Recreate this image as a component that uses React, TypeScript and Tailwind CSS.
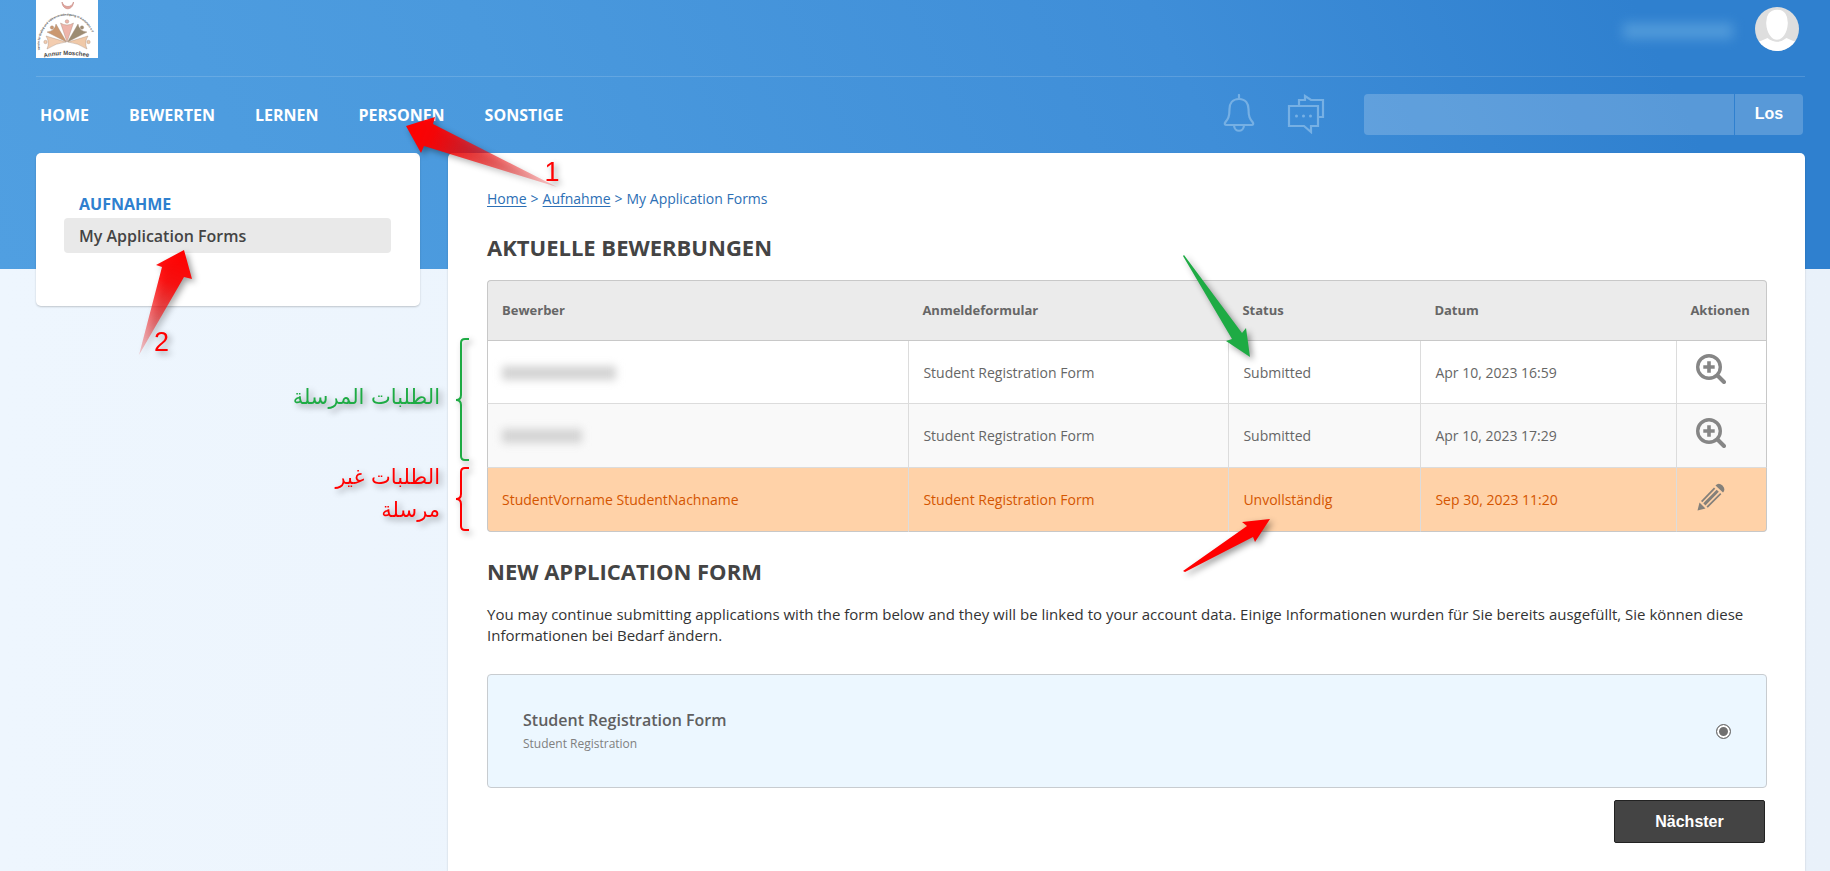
import React from "react";

const shadow = "drop-shadow-[3px_3px_3px_rgba(0,0,0,0.4)]";

function Logo() {
  return (
    <svg viewBox="0 0 62 58" className="h-[58px] w-[62px] bg-white" role="img" aria-label="Annur Moschee">
      <defs>
        <path id="logo-arc" d="M4 50C1 34 12 15.500 31 15.500S61 34 58 50" />
        <path id="logo-base" d="M8 57.500Q31 52.500 55 57.500" />
      </defs>
      <path d="M26 2C26.500 11 37 11 37.500 2C36 8 28 8 26 2Z" fill="#e3a39b" stroke="#c98f88" strokeWidth=".7" />
      <text fontFamily="Liberation Sans, sans-serif" fontSize="2.900" fontWeight="700" fill="#444">
        <textPath href="#logo-arc">Verein für Dialog und Völkerverständigung in Karlsruhe e.V</textPath>
      </text>
      <g stroke="#a58a78" strokeWidth=".4">
        <path d="M31 42L24.500 23Q31 27 37.500 23Z" fill="#eeb4aa" />
        <path d="M30.500 42L11 32Q19 31 20 24Z" fill="#cb9870" />
        <path d="M31.500 42L51 32Q43 31 42 24Z" fill="#9c8c72" />
        <path d="M30 42L10 36Q14 42 11 49Q20 43 30 42Z" fill="#f3cdb0" />
        <path d="M32 42L52 36Q48 42 51 49Q42 43 32 42Z" fill="#f0c9a8" />
        <circle cx="31" cy="21.500" r="1.800" fill="#eeb4aa" />
        <circle cx="16" cy="27.500" r="1.700" fill="#cb9870" />
        <circle cx="46" cy="27.500" r="1.700" fill="#9c8c72" />
        <circle cx="9.500" cy="42" r="1.700" fill="#f3cdb0" />
        <circle cx="52.500" cy="42" r="1.700" fill="#f0c9a8" />
      </g>
      <text fontFamily="Liberation Sans, sans-serif" fontSize="6" fontWeight="700" fill="#4a4a4a">
        <textPath href="#logo-base">Annur Moschee</textPath>
      </text>
    </svg>
  );
}

function Avatar() {
  return (
    <svg viewBox="0 0 44 44" className="size-11 rounded-full bg-[#dedede]">
      <path d="M0 35.500Q7 34 12.500 31Q22 38.500 31.500 31Q37 34 44 35.500V44H0Z" fill="#fff" />
      <path d="M22 2C30 2 34 8 33.500 17C33 26 28 33.500 22 33.500S11 26 10.500 17C10 8 14 2 22 2Z" fill="#fff" stroke="#dedede" strokeWidth="1.500" />
    </svg>
  );
}

function BellIcon() {
  return (
    <svg viewBox="0 0 32 38" className="h-[38px] w-8" fill="none" stroke="#76b0e4" strokeWidth="2.200" strokeLinejoin="round" strokeLinecap="round">
      <path d="M16 1V5" />
      <path d="M16 5C9 5 6.500 10 6.500 15C6.500 23 5 25 2.500 28C1 30 2 31 3.500 31H28.500C30 31 31 30 29.500 28C27 25 25.500 23 25.500 15C25.500 10 23 5 16 5Z" />
      <path d="M11 31.500C11.500 38.500 20.500 38.500 21 31.500" />
    </svg>
  );
}

function ChatIcon() {
  return (
    <svg viewBox="0 0 38 40" className="h-10 w-[38px]" fill="none" stroke="#76b0e4" strokeWidth="2.200">
      <path d="M12 11V6H18V2L24 6H36V23H32" />
      <path d="M2 12H31V32H24V38L17 32H2Z" />
      <g fill="#76b0e4" stroke="none">
        <circle cx="9.500" cy="22" r="1.500" />
        <circle cx="16.500" cy="22" r="1.500" />
        <circle cx="23.500" cy="22" r="1.500" />
      </g>
    </svg>
  );
}

function MagnifierIcon() {
  return (
    <svg viewBox="0 0 30 30" className="size-[30px]" fill="none" stroke="#868686">
      <circle cx="13" cy="13" r="11.300" strokeWidth="3.400" />
      <path d="M22 22L28 28" strokeWidth="4" strokeLinecap="round" />
      <path d="M13 7.300V18.700M7.300 13H18.700" strokeWidth="3.600" />
    </svg>
  );
}

function PencilIcon() {
  return (
    <svg viewBox="0 0 30 30" className="size-[30px]" fill="#84807a">
      <path d="M19.500 3.500Q22.500 0 26.500 3.500Q30 7.500 27 10.500Z" />
      <path d="M1.500 28.500L3.500 20.500L9.500 26.500Z" />
      <path d="M5 19L18 5.500L19.300 6.800L6.300 20.300Z" />
      <path d="M7.300 21.300L20.700 7.700L22.800 9.800L9.400 23.400Z" />
      <path d="M10.500 24.500L24.200 11L25.300 12.300L11.800 25.800Z" />
    </svg>
  );
}

function Bracket({ color, height, className }: { color: string; height: number; className: string }) {
  const m = Math.round(height / 2);
  return (
    <svg viewBox={`0 0 16 ${height}`} width="16" height={height} className={`absolute overflow-visible ${shadow} ${className}`} fill="none" stroke={color} strokeWidth="2">
      <path d={`M14 1H10Q6 1 6 5V${m - 5}Q6 ${m} 1 ${m}Q6 ${m} 6 ${m + 5}V${height - 5}Q6 ${height - 1} 10 ${height - 1}H14`} />
    </svg>
  );
}

function StepOneArrow() {
  return (
    <>
      <svg viewBox="0 0 160 80" className={`pointer-events-none absolute left-[41px] top-[7px] z-20 h-20 w-40 overflow-visible ${shadow}`}>
        <defs>
          <linearGradient id="fade-one" gradientUnits="userSpaceOnUse" x1="10" y1="18" x2="158" y2="78">
            <stop offset="0" stopColor="#f00" />
            <stop offset=".15" stopColor="#f00" stopOpacity=".95" />
            <stop offset="1" stopColor="#e11" stopOpacity=".2" />
          </linearGradient>
        </defs>
        <path d="M6 16L35 7L33 14L157 77L24 36L21 43Z" fill="url(#fade-one)" />
      </svg>
      <span className={`pointer-events-none absolute left-[186px] top-[53px] z-20 font-['Liberation_Sans',sans-serif] text-[27px] font-normal leading-8 text-[#f00] ${shadow}`}>1</span>
    </>
  );
}

function StepTwoArrow() {
  return (
    <>
      <svg viewBox="0 0 60 110" className={`pointer-events-none absolute left-[71px] top-[30px] z-20 h-[110px] w-[60px] overflow-visible ${shadow}`}>
        <defs>
          <linearGradient id="fade-two" gradientUnits="userSpaceOnUse" x1="48" y1="4" x2="4" y2="106">
            <stop offset="0" stopColor="#f00" />
            <stop offset=".3" stopColor="#f00" stopOpacity=".9" />
            <stop offset="1" stopColor="#e11" stopOpacity=".2" />
          </linearGradient>
        </defs>
        <path d="M49 2L21 17L27 19L4 107L49 29L57 31Z" fill="url(#fade-two)" />
      </svg>
      <span className={`pointer-events-none absolute left-[90px] top-[108px] z-20 font-['Liberation_Sans',sans-serif] text-[27px] font-normal leading-8 text-[#f00] ${shadow}`}>2</span>
    </>
  );
}

function SubmittedArrow() {
  return (
    <svg viewBox="0 0 76 112" className={`pointer-events-none absolute -left-[49px] -top-[91px] z-20 h-28 w-[76px] overflow-visible ${shadow}`}>
      <path d="M4 5L62 83L66 78L70 107L46 91L52 89L3 6Z" fill="#1eab44" />
    </svg>
  );
}

function IncompleteArrow() {
  return (
    <svg viewBox="0 0 96 62" className={`pointer-events-none absolute -left-[49px] top-[46px] z-20 h-[62px] w-24 overflow-visible ${shadow}`}>
      <path d="M3 57L67 12L62 8L90 5L75 28L73 23L5 58Z" fill="#f00" />
    </svg>
  );
}

const navItems = ["HOME", "BEWERTEN", "LERNEN", "PERSONEN", "SONSTIGE"];

type Row = { name?: string; blur?: string; status: string; date: string; tone: string; divider: string; open: boolean };

const rows: Row[] = [
  { blur: "w-[114px]", status: "Submitted", date: "Apr 10, 2023 16:59", tone: "bg-white text-[#666]", divider: "border-b-[#dcdcdc]", open: false },
  { blur: "w-20", status: "Submitted", date: "Apr 10, 2023 17:29", tone: "bg-[#f9f9f9] text-[#666]", divider: "border-b-[#dcdcdc]", open: false },
  { name: "StudentVorname StudentNachname", status: "Unvollständig", date: "Sep 30, 2023 11:20", tone: "bg-[#ffd2a8] text-[#d45500]", divider: "border-b-[#c8c8c8]", open: true },
];

function ApplicationsTable() {
  const cell = "border-r border-r-[#dcdcdc] px-[14px] pt-px";
  return (
    <table className="w-full table-fixed border-separate border-spacing-0 rounded text-left text-[13px]">
      <thead>
        <tr className="h-[61px] text-[#666]">
          <th className="w-[33%] rounded-tl border border-r-0 border-[#c8c8c8] bg-[#ebebeb] px-[14px]">Bewerber</th>
          <th className="w-[25%] border-y border-[#c8c8c8] bg-[#ebebeb] px-[13px]">Anmeldeformular</th>
          <th className="w-[15%] border-y border-[#c8c8c8] bg-[#ebebeb] px-[13px]">Status</th>
          <th className="w-[20%] border-y border-[#c8c8c8] bg-[#ebebeb] px-[13px]">Datum</th>
          <th className="w-[7%] rounded-tr border border-l-0 border-[#c8c8c8] bg-[#ebebeb] pl-[13px]">Aktionen</th>
        </tr>
      </thead>
      <tbody className="text-sm">
        {rows.map((r, i) => (
          <tr key={r.date} className={i === 0 ? "h-[63px]" : "h-16"}>
            <td className={`border-b border-l border-l-[#c8c8c8] ${cell} ${r.tone} ${r.divider} ${r.open ? "rounded-bl" : ""}`}>
              {r.name ?? <span aria-hidden="true" className={`block h-3.5 bg-[#d3d3d3] blur-[4px] ${r.blur}`} />}
            </td>
            <td className={`border-b ${cell} ${r.tone} ${r.divider}`}>Student Registration Form</td>
            <td className={`relative border-b ${cell} ${r.tone} ${r.divider}`}>
              {r.status}
              {i === 0 && <SubmittedArrow />}
              {r.open && <IncompleteArrow />}
            </td>
            <td className={`border-b ${cell} ${r.tone} ${r.divider}`}>{r.date}</td>
            <td className={`border-b border-r border-r-[#c8c8c8] pb-1.5 pl-[19px] ${r.tone} ${r.divider} ${r.open ? "rounded-br" : ""}`}>
              <button type="button" aria-label={r.open ? "Bearbeiten" : "Ansehen"} className="block">
                {r.open ? <PencilIcon /> : <MagnifierIcon />}
              </button>
            </td>
          </tr>
        ))}
      </tbody>
    </table>
  );
}

export default function App() {
  return (
    <div className="flex min-h-screen flex-col overflow-x-hidden bg-[linear-gradient(65deg,#509fe1_0%,#4a99dd_30%,#3f8ed8_65%,#2f80cf_90%),linear-gradient(90deg,#eef6fe,#e9f1fa)] bg-[length:100%_269px,100%_100%] bg-no-repeat pl-9 pr-[25px] font-['Open_Sans',sans-serif]">
      <header>
        <div className="flex h-[77px] items-start justify-between border-b border-white/15">
          <Logo />
          <div className="mr-1.5 flex items-center gap-[22px] pt-[7px]">
            <span aria-hidden="true" className="mt-1 h-4 w-[110px] bg-[#5fa5df] opacity-70 blur-[6px]" />
            <Avatar />
          </div>
        </div>
        <div className="flex h-[76px] items-center justify-between">
          <nav>
            <ul className="flex gap-10 pl-1 text-base font-bold leading-6 text-white">
              {navItems.map((item) => (
                <li key={item} className="relative">
                  <a href="#">{item}</a>
                  {item === "PERSONEN" && <StepOneArrow />}
                </li>
              ))}
            </ul>
          </nav>
          <div className="flex items-start pb-0.5">
            <button type="button" aria-label="Benachrichtigungen" className="mr-8"><BellIcon /></button>
            <button type="button" aria-label="Nachrichten" className="mr-[39px]"><ChatIcon /></button>
            <form className="mr-0.5 flex h-[41px] gap-px" onSubmit={(e) => e.preventDefault()}>
              <input type="text" aria-label="Suche" className="w-[370px] rounded-l bg-white/20 px-3 text-white outline-none" />
              <button type="submit" className="w-[68px] rounded-r bg-white/20 font-['Liberation_Sans',sans-serif] text-base font-bold text-white">Los</button>
            </form>
          </div>
        </div>
      </header>

      <div className="flex flex-1 items-stretch gap-7">
        <aside className="w-96 shrink-0 self-start rounded-[5px] bg-white pb-[53px] pl-7 pr-[29px] pt-[39px] text-base leading-6 shadow-[0_1px_2px_rgba(0,0,0,0.2)]">
          <h3 className="px-[15px] font-bold text-[#2f80cf]">AUFNAHME</h3>
          <div className="relative mt-0.5">
            <a href="#" className="flex h-[35px] items-center rounded-sm bg-[#e9e9e9] px-[15px] font-semibold text-[#444]">My Application Forms</a>
            <StepTwoArrow />
          </div>
        </aside>

        <main className="min-w-0 flex-1 rounded-t-[5px] bg-white pb-6 pl-[39px] pr-[38px] pt-9 shadow-[0_1px_2px_rgba(0,0,0,0.2)]">
          <nav aria-label="Breadcrumb" className="flex gap-1 text-sm leading-5 text-[#2c6fb5]">
            <a href="#" className="underline underline-offset-2">Home</a>
            <span>&gt;</span>
            <a href="#" className="underline underline-offset-2">Aufnahme</a>
            <span>&gt;</span>
            <span>My Application Forms</span>
          </nav>

          <h2 className="mt-6 text-[22px] font-bold leading-7 text-[#444]">AKTUELLE BEWERBUNGEN</h2>
          <div className="relative mt-[19px]">
            <ApplicationsTable />
            <Bracket color="#1eab44" height={123} className="-left-8 top-[58px]" />
            <Bracket color="#ff0000" height={64} className="-left-8 top-[187px]" />
            <p dir="rtl" lang="ar" className={`absolute right-full top-[101px] mr-[47px] whitespace-nowrap font-['DejaVu_Sans',sans-serif] text-[21px] leading-[33px] text-[#1eab44] ${shadow}`}>الطلبات المرسلة</p>
            <p dir="rtl" lang="ar" className={`absolute right-full top-[181px] mr-[47px] whitespace-nowrap font-['DejaVu_Sans',sans-serif] text-[21px] leading-[33px] text-[#f00] ${shadow}`}>
              الطلبات غير<br />مرسلة
            </p>
          </div>

          <h2 className="mt-[25px] text-[22px] font-bold leading-7 text-[#444]">NEW APPLICATION FORM</h2>
          <p className="mt-[19px] text-[15px] leading-[21px] text-[#333]">
            You may continue submitting applications with the form below and they will be linked to your account data. Einige Informationen wurden für Sie bereits ausgefüllt, Sie können diese Informationen bei Bedarf ändern.
          </p>

          <form onSubmit={(e) => e.preventDefault()}>
            <label className="mt-7 flex items-center justify-between rounded border border-[#c8ccd0] bg-[#ecf7ff] py-[33px] pl-[35px] pr-[35px]">
              <span className="flex flex-col gap-0.5">
                <span className="text-base font-semibold leading-6 text-[#5f5f5f]">Student Registration Form</span>
                <span className="text-xs leading-5 text-[#808080]">Student Registration</span>
              </span>
              <input type="radio" name="form" defaultChecked className="size-[15px] appearance-none rounded-full border border-[#707070] bg-white shadow-[inset_0_0_0_2px_white] checked:bg-[#707070]" />
            </label>
            <div className="mt-3 flex justify-end pr-0.5">
              <button type="submit" className="h-[43px] w-[151px] rounded-xs border border-[#222] bg-[#444] font-['Liberation_Sans',sans-serif] text-base font-bold text-white">Nächster</button>
            </div>
          </form>
        </main>
      </div>
    </div>
  );
}
